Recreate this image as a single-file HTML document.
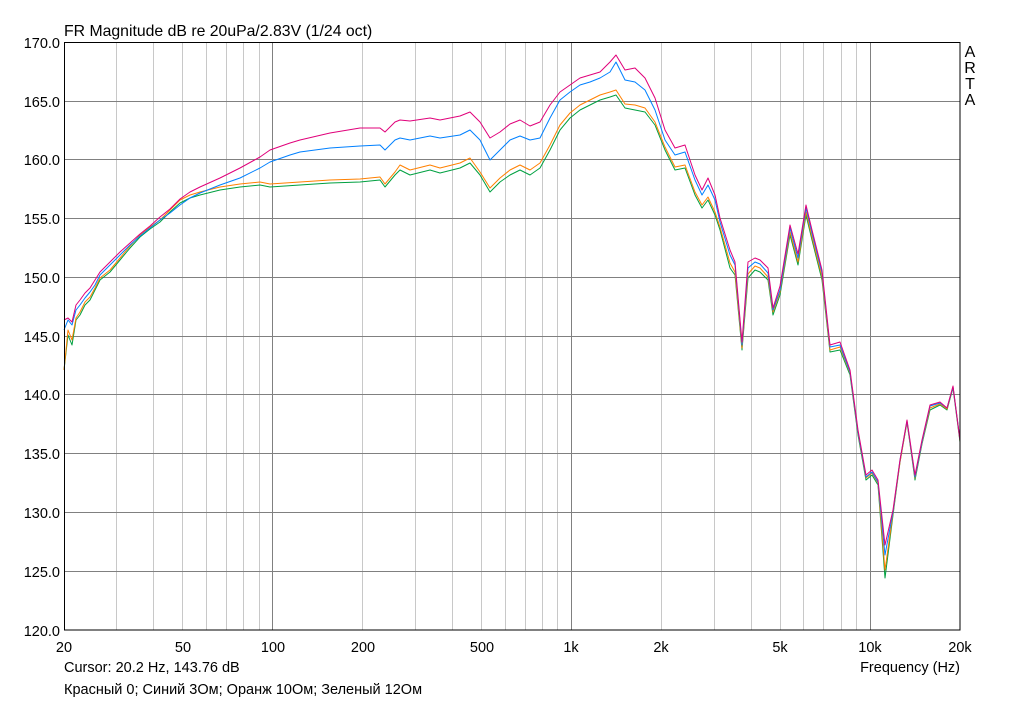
<!DOCTYPE html>
<html><head><meta charset="utf-8"><style>
html,body{margin:0;padding:0;background:#fff;}
svg{display:block;font-family:"Liberation Sans",sans-serif;}
</style></head><body>
<svg width="1024" height="701" viewBox="0 0 1024 701" xmlns="http://www.w3.org/2000/svg">
<rect width="1024" height="701" fill="#fff"/>
<g stroke="#c8c8c8" stroke-width="1">
<path d="M116.5 42V630M153.5 42V630M182.5 42V630M206.5 42V630M226.5 42V630M243.5 42V630M259.5 42V630M362.5 42V630M415.5 42V630M452.5 42V630M481.5 42V630M505.5 42V630M525.5 42V630M542.5 42V630M557.5 42V630M661.5 42V630M714.5 42V630M751.5 42V630M780.5 42V630M803.5 42V630M823.5 42V630M841.5 42V630M856.5 42V630"/>
</g>
<g stroke="#808080" stroke-width="1">
<path d="M272.5 42V630M571.5 42V630M870.5 42V630"/>
<path d="M64 101.5H960M64 159.5H960M64 218.5H960M64 277.5H960M64 336.5H960M64 394.5H960M64 453.5H960M64 512.5H960M64 571.5H960"/>
</g>
<g fill="none" stroke-width="1" stroke-linejoin="round">
<polyline stroke="#00a040" points="64,370 68,335 72,345 76,320 80,315 85,305 90,300 95,290 100,280 110,272 120,260 130,248 140,237 150,229 160,222 170,212 180,203 190,198 200,195 220,190 240,187 260,185 270,187 300,185 330,183 360,182 380,180 385,187 395,175 400,170 410,175 430,170 440,173 460,168 470,163 480,175 490,192 500,182 510,175 520,170 530,175 540,168 550,150 560,130 570,118 580,110 590,105 600,100 610,97 616,95 625,108 635,110 645,112 655,125 665,150 675,170 685,168 695,195 702,208 708,200 715,215 720,230 730,268 735,275 742,350 748,278 755,270 760,272 768,280 773,315 780,295 790,235 798,265 806,215 812,240 822,280 830,352 840,350 850,375 858,435 866,480 872,475 878,485 885,578 893,515 900,462 907,422 915,480 922,444 930,410 940,405 947,410 953,388 960,442"/>
<polyline stroke="#ff8000" points="64,370 68,330 72,340 76,318 80,312 85,302 90,297 95,288 100,278 110,270 120,258 130,246 140,235 150,227 160,220 170,210 180,200 190,195 200,192 220,187 240,184 260,182 270,184 300,182 330,180 360,179 380,177 385,184 395,172 400,165 410,170 430,165 440,168 460,163 470,158 480,172 490,188 500,178 510,170 520,165 530,170 540,163 550,145 560,125 570,113 580,105 590,100 600,95 610,92 616,90 625,104 635,105 645,108 655,122 665,147 675,167 685,165 695,192 702,205 708,197 715,212 720,227 730,263 735,272 742,348 748,274 755,266 760,268 768,277 773,312 780,292 790,232 798,262 806,212 812,237 822,277 830,350 840,347 850,373 858,433 866,478 872,473 878,483 885,570 893,513 900,462 907,422 915,478 922,443 930,408 940,404 947,409 953,387 960,441"/>
<polyline stroke="#0080ff" points="64,330 68,320 72,325 76,310 80,305 85,298 90,292 95,285 100,275 110,265 120,255 130,245 140,236 150,228 160,220 170,213 180,205 190,198 200,193 220,185 240,178 260,168 270,162 290,155 300,152 330,148 360,146 380,145 385,150 395,140 400,138 410,140 430,136 440,138 460,135 470,130 480,140 490,160 500,150 510,140 520,136 530,140 540,138 550,118 560,100 570,92 580,85 590,82 600,78 610,72 616,62 625,80 635,82 645,90 655,110 665,140 675,155 685,152 695,180 702,195 708,185 715,200 720,222 730,255 735,265 742,345 748,268 755,262 760,264 768,273 773,310 780,290 790,228 798,258 806,208 812,233 822,273 830,347 840,345 850,372 858,432 866,477 872,472 878,482 885,555 893,512 900,460 907,421 915,477 922,442 930,406 940,403 947,408 953,387 960,440"/>
<polyline stroke="#e0007a" points="64,320 68,318 72,322 76,305 80,300 85,293 90,288 95,280 100,272 110,262 120,252 130,243 140,234 150,226 160,217 170,209 180,199 190,192 200,187 220,178 240,168 260,157 270,150 290,143 300,140 330,133 360,128 380,128 385,132 395,122 400,120 410,121 430,118 440,120 460,116 470,112 480,122 490,138 500,132 510,124 520,120 530,126 540,122 550,105 560,92 570,85 580,78 590,75 600,72 610,62 616,55 625,70 635,68 645,78 655,98 665,130 675,148 685,145 695,175 702,190 708,178 715,195 720,218 730,250 735,262 742,342 748,262 755,258 760,260 768,268 773,308 780,286 790,225 798,254 806,205 812,230 822,270 830,345 840,342 850,370 858,430 866,475 872,470 878,480 885,545 893,510 900,460 907,420 915,475 922,440 930,405 940,402 947,408 953,386 960,440"/>
</g>
<rect x="64.5" y="42.5" width="895.5" height="587.5" fill="none" stroke="#000" stroke-width="1"/>
<g font-size="14.5" fill="#000">
<text x="64" y="36" font-size="15.8">FR Magnitude dB re 20uPa/2.83V (1/24 oct)</text>
<g text-anchor="end">
<text x="60" y="48">170.0</text><text x="60" y="107">165.0</text><text x="60" y="165">160.0</text><text x="60" y="224">155.0</text><text x="60" y="283">150.0</text><text x="60" y="342">145.0</text><text x="60" y="400">140.0</text><text x="60" y="459">135.0</text><text x="60" y="518">130.0</text><text x="60" y="577">125.0</text><text x="60" y="636">120.0</text>
</g>
<g text-anchor="middle">
<text x="64" y="652">20</text><text x="183" y="652">50</text><text x="273" y="652">100</text><text x="363" y="652">200</text><text x="482" y="652">500</text><text x="571" y="652">1k</text><text x="661" y="652">2k</text><text x="780" y="652">5k</text><text x="870" y="652">10k</text><text x="960" y="652">20k</text>
<g font-size="16"><text x="970" y="57">A</text><text x="970" y="73">R</text><text x="970" y="89">T</text><text x="970" y="105">A</text></g>
</g>
<text x="64" y="672">Cursor: 20.2 Hz, 143.76 dB</text>
<text x="960" y="672" text-anchor="end">Frequency (Hz)</text>
<text x="64" y="694">Красный 0; Синий 3Ом; Оранж 10Ом; Зеленый 12Ом</text>
</g>
</svg>
</body></html>
